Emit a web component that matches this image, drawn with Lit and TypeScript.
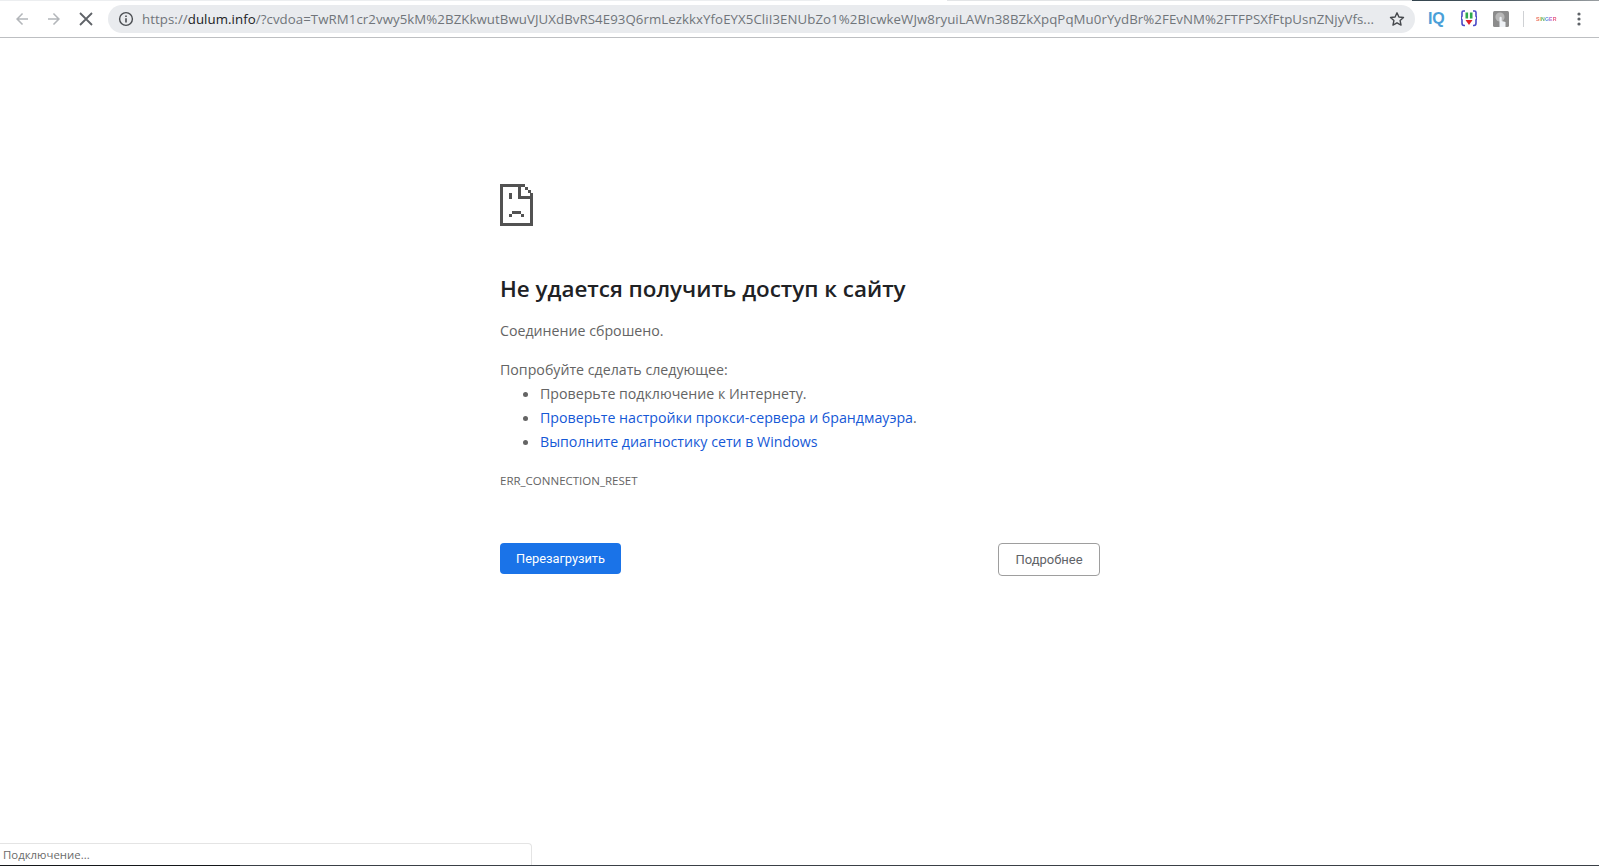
import { LitElement, html, css, svg } from "lit";
import { customElement } from "lit/decorators.js";

const URL_TAIL = "/?cvdoa=TwRM1cr2vwy5kM%2BZKkwutBwuVJUXdBvRS4E93Q6rmLezkkxYfoEYX5CliI3ENUbZo1%2BIcwkeWJw8ryuiLAWn38BZkXpqPqMu0rYydBr%2FEvNM%2FTFPSXfFtpUsnZNjyVfs...";

@customElement("app-root")
export class AppRoot extends LitElement {
  static styles = css`
    :host { display: flex; flex-direction: column; width: 1599px; height: 866px; overflow: hidden; background: #fff; position: relative; font-family: "Open Sans", "Noto Sans", sans-serif; }
    .topline { position: absolute; left: 0; right: 0; top: 0; height: 1px; background: linear-gradient(90deg, #eceef0 0, #eceef0 820px, #fff 820px, #fff 947px, #e3e5e7 947px, #e3e5e7 1412px, #34444e 1412px, #4a5860 1500px, #9a9fa2 1599px); }
    .toolbar { height: 37px; flex: none; display: flex; align-items: center; border-bottom: 1px solid #bdbfc2; background: #fff; box-sizing: content-box; }
    .nav { width: 32px; display: flex; justify-content: center; flex: none; }
    .nav svg { display: block; }
    .navs { display: flex; padding-left: 6px; width: 102px; flex: none; }
    .omni { width: 1307px; height: 28px; flex: none; border-radius: 14px; background: #e9ebee; display: flex; align-items: center; box-sizing: border-box; padding-left: 10px; }
    .omni .info { flex: none; margin-right: 8px; display: block; }
    .url { font-size: 13.25px; color: #70757a; white-space: nowrap; width: 1240px; flex: none; letter-spacing: 0.067px; }
    .url b { font-weight: 400; color: #202124; }
    .star { flex: none; margin-left: 7px; display: block; }
    .ext { display: flex; align-items: center; flex: none; padding-left: 13px; }
    .ext svg { display: block; flex: none; }
    .iq { font-family: "Liberation Sans", sans-serif; font-weight: 700; font-size: 16px; color: #4a9fd8; width: 18px; letter-spacing: -0.3px; }
    .e2 { margin-left: 15px; }
    .e3 { margin-left: 16px; filter: blur(0.3px); }
    .sep { width: 1px; height: 16px; background: #cfd1d4; margin-left: 14px; flex: none; }
    .singer { font-family: "Liberation Sans", sans-serif; font-size: 5.2px; font-weight: 700; margin-left: 12px; width: 20px; white-space: nowrap; letter-spacing: 0.1px; opacity: 0.85; filter: blur(0.3px); }
    .menu { margin-left: 21px; }
    main { width: 600px; margin-left: 500px; padding-top: 146px; flex: none; color: #646464; font-size: 14.2px; }
    .sad { display: block; width: 33px; height: 42px; }
    h1 { margin: 48px 0 0; font-size: 22.4px; line-height: 30px; font-weight: 600; color: #202124; white-space: nowrap; }
    p { margin: 0; line-height: 20px; white-space: nowrap; }
    .reason { margin-top: 17px; }
    .try { margin-top: 19px; }
    ul { list-style: none; margin: 2px 0 0; padding: 0 0 0 40px; }
    li { height: 24px; line-height: 24px; position: relative; white-space: nowrap; }
    li::before { content: ""; position: absolute; left: -17px; top: 10px; width: 5px; height: 5px; border-radius: 50%; background: #646464; }
    a { color: #1558d6; text-decoration: none; }
    .code { margin-top: 19px; font-size: 11.5px; line-height: 16px; color: #646464; }
    .buttons { display: flex; justify-content: space-between; align-items: flex-start; margin-top: 54px; }
    button { font-family: Roboto, sans-serif; font-size: 13px; border-radius: 4px; padding: 0; box-sizing: border-box; }
    .reload { width: 121px; height: 31px; background: #1a73e8; border: none; color: #fff; font-weight: 400; font-size: 12.8px; }
    .details { width: 102px; height: 33px; background: #fff; border: 1px solid #9e9e9e; color: #5f6368; font-weight: 400; }
    .status { position: absolute; left: 0; bottom: 0; width: 532px; height: 23px; box-sizing: border-box; background: #fff; border: 1px solid #e4e4e4; border-left: none; border-bottom: none; border-top-right-radius: 4px; font-size: 11.4px; line-height: 21px; color: #6b6b6b; padding-left: 3px; }
    .footer { position: absolute; left: 0; right: 0; bottom: 0; height: 1px; background: linear-gradient(90deg, #14171a 0, #14171a 240px, #3a4046 240px, #3a4046 1599px); }
  `;

  private arrow(dir: "l" | "r") {
    const d = dir === "l" ? "M16 7.25H6.9l4.2-4.2L10 2 4 8l6 6 1.05-1.05-4.15-4.2H16z" : "M4 7.25h9.1l-4.2-4.2L10 2l6 6-6 6-1.05-1.05 4.15-4.2H4z";
    return html`<div class="nav"><svg width="20" height="16" viewBox="0 0 20 16"><path d=${d} fill="#b3b6ba"></path></svg></div>`;
  }

  render() {
    return html`
      <div class="toolbar">
        <div class="navs">
          ${this.arrow("l")}${this.arrow("r")}
          <div class="nav"><svg width="16" height="16" viewBox="0 0 16 16"><path d="M2 2l12 12M14 2L2 14" stroke="#5f6368" stroke-width="1.8" fill="none"></path></svg></div>
        </div>
        <div class="omni">
          <svg class="info" width="16" height="16" viewBox="0 0 16 16"><circle cx="8" cy="8" r="6.4" fill="none" stroke="#4a4d51" stroke-width="1.4"></circle><path d="M7.2 7.2h1.6v4.3H7.2zM7.2 4.5h1.6v1.6H7.2z" fill="#4a4d51"></path></svg>
          <div class="url">https://<b>dulum.info</b>${URL_TAIL}</div>
          <svg class="star" width="16" height="16" viewBox="0 0 16 16"><path d="M8 1.8l1.9 4.2 4.6.5-3.4 3.1.95 4.5L8 11.8l-4.05 2.3.95-4.5L1.5 6.5l4.6-.5z" fill="none" stroke="#45484c" stroke-width="1.4" stroke-linejoin="round"></path></svg>
        </div>
        <div class="ext">
          <div class="iq">IQ</div>
          <svg class="e2" width="16" height="17" viewBox="0 0 16 17">
            <path d="M4 1H2.5Q1 1 1 2.5v3.5L0 8l1 2v3Q1 15.5 3 15.5h1M12 1h1.5Q15 1 15 2.5v3.5l1 2-1 2v3Q15 15.5 13 15.5h-1" fill="none" stroke="#4a4ac8" stroke-width="1.6"></path>
            <rect x="4.5" y="2.5" width="2.6" height="6" fill="#2fa84f"></rect><rect x="8.9" y="2.5" width="2.6" height="6" fill="#2fa84f"></rect>
            <path d="M4.5 10h7L8 15z" fill="#e0202a"></path>
          </svg>
          <svg class="e3" width="16" height="16" viewBox="0 0 16 16">
            <rect width="16" height="16" rx="1.5" fill="#8c8c8c"></rect>
            <circle cx="7" cy="6" r="4.6" fill="#b8b8b8"></circle>
            <path d="M6.5 16V6.5q1.2-1.4 2.2 0V10l3.8 1v5z" fill="#eef1f5"></path>
          </svg>
          <div class="sep"></div>
          <div class="singer"><span style="color:#e8543a">S</span><span style="color:#e8a21f">I</span><span style="color:#4aa84f">N</span><span style="color:#3c7fd9">G</span><span style="color:#a14fc9">E</span><span style="color:#e23b6d">R</span></div>
          <svg class="menu" width="4" height="14" viewBox="0 0 4 14"><circle cx="2" cy="2" r="1.6" fill="#5f6368"></circle><circle cx="2" cy="7" r="1.6" fill="#5f6368"></circle><circle cx="2" cy="12" r="1.6" fill="#5f6368"></circle></svg>
        </div>
      </div>
      <main>
        ${this.sad()}
        <h1>Не удается получить доступ к сайту</h1>
        <p class="reason">Соединение сброшено.</p>
        <p class="try">Попробуйте сделать следующее:</p>
        <ul>
          <li>Проверьте подключение к Интернету.</li>
          <li><a>Проверьте настройки прокси-сервера и брандмауэра</a>.</li>
          <li><a>Выполните диагностику сети в Windows</a></li>
        </ul>
        <div class="code">ERR_CONNECTION_RESET</div>
        <div class="buttons">
          <button class="reload">Перезагрузить</button>
          <button class="details">Подробнее</button>
        </div>
      </main>
      <div class="topline"></div>
      <div class="status">Подключение...</div>
      <div class="footer"></div>
    `;
  }

  private sad() {
    return html`<svg class="sad" viewBox="0 0 33 42" shape-rendering="crispEdges">
      ${svg`<path fill="#525252" d="M0 0h22v3H3v36h27V12h3v30H0z"></path>
      <path fill="#525252" d="M18 0h3v12h12v3H18z"></path>
      <path fill="#525252" d="M22 0h3v3h-3zM25 3h3v3h-3zM28 6h3v3h-3zM30 9h3v3h-3z"></path>
      <rect x="9" y="9" width="3" height="6" fill="#525252"></rect>
      <rect x="12" y="27" width="9" height="3" fill="#525252"></rect>
      <rect x="9" y="30" width="3" height="3" fill="#525252"></rect>
      <rect x="21" y="30" width="3" height="3" fill="#525252"></rect>`}
    </svg>`;
  }
}
